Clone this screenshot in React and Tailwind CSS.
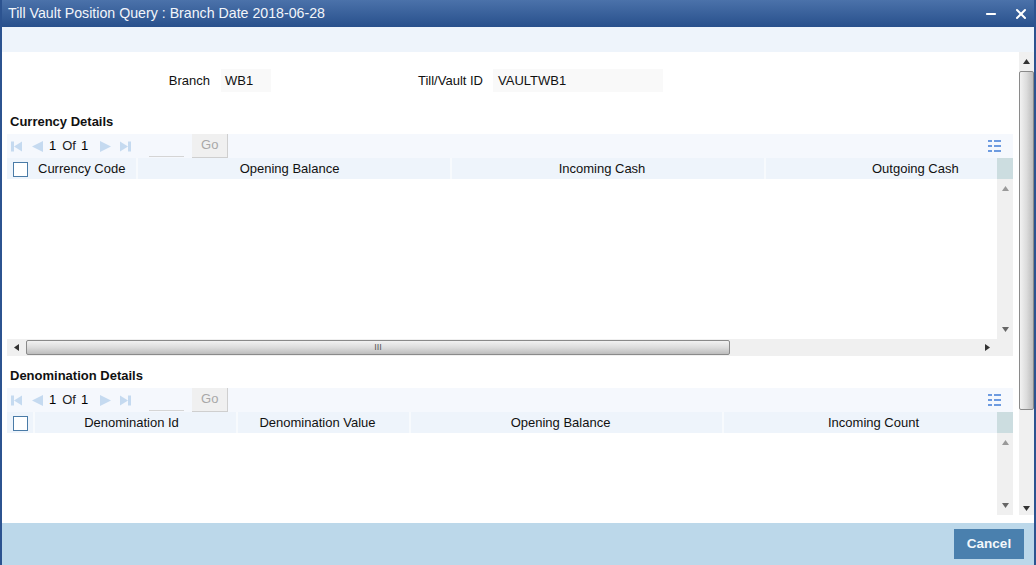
import { Minus, X } from "lucide-react";

function Arrow({ dir, color = "#555", size = 7 }) {
  const paths = {
    up: "M0 6 L3.5 1 L7 6 Z",
    down: "M0 1 L3.5 6 L7 1 Z",
    left: "M6 0 L1 3.5 L6 7 Z",
    right: "M1 0 L6 3.5 L1 7 Z",
  };
  return (
    <svg width={size} height={size} viewBox="0 0 7 7" className="block">
      <path d={paths[dir]} fill={color} />
    </svg>
  );
}

function PagerIcon({ flip, tall }) {
  return (
    <svg width="11" height="11" viewBox="0 0 11 11" className={flip ? "block -scale-x-100" : "block"}>
      {tall && <rect x="0" y="0.5" width="3" height="10" fill="#c5daf0" />}
      <path d={tall ? "M11 0.5 L3 5.5 L11 10.5 Z" : "M11 0 L0 5.5 L11 11 Z"} fill="#c5daf0" />
    </svg>
  );
}

function ListIcon() {
  return (
    <svg width="13" height="12" viewBox="0 0 13 12" className="block">
      <rect x="0" y="0" width="4" height="2" fill="#6d9be0" />
      <rect x="6" y="0" width="7" height="2" fill="#6d9be0" />
      <rect x="0" y="5" width="4" height="2" fill="#6d9be0" />
      <rect x="6" y="5" width="7" height="2" fill="#6d9be0" />
      <rect x="0" y="10" width="4" height="2" fill="#6d9be0" />
      <rect x="6" y="10" width="7" height="2" fill="#6d9be0" />
    </svg>
  );
}

function GridToolbar() {
  return (
    <div className="flex h-[24px] items-center bg-[#f5f8fd] pl-[4px] pr-[12px]">
      <PagerIcon tall />
      <div className="ml-[10px]"><PagerIcon /></div>
      <span className="ml-[6px] text-[13px] text-black">1</span>
      <span className="ml-[6px] text-[13px] text-[#222]">Of</span>
      <span className="ml-[5px] text-[13px] text-black">1</span>
      <div className="ml-[12px]"><PagerIcon flip /></div>
      <div className="ml-[9px]"><PagerIcon flip tall /></div>
      <div className="ml-[18px] h-[23px] w-[35px] self-start border-b border-[#d5d5d5]" />
      <div className="ml-[8px] flex h-[24px] w-[36px] items-center justify-center self-start border-r border-b border-[#cfcfcf] bg-[#f0f0f0] pb-[2px] text-[13px] text-[#a8a8a8]">
        Go
      </div>
      <div className="ml-auto"><ListIcon /></div>
    </div>
  );
}

function GridHeader({ cols }) {
  return (
    <div className="flex h-[21px] items-center">
      {cols.map((c, i) => (
        <div
          key={i}
          style={{ width: c.w, paddingLeft: c.inset, paddingRight: c.nudge }}
          className={`flex h-full shrink-0 items-center bg-[#eef4fb] pt-[1px] text-[13px] text-[#111] ${
            c.left ? "" : "justify-center"
          } ${i < cols.length - 1 ? "border-r-2 border-[#f7fafd]" : ""}`}
        >
          {c.check && <div className="ml-[6px] h-[15px] w-[15px] shrink-0 border border-[#4a7ba7] bg-white" />}
          {c.label && <span className={c.check ? "ml-[10px]" : ""}>{c.label}</span>}
        </div>
      ))}
      <div className="h-full w-[16px] shrink-0 bg-[#ccdde0]" />
    </div>
  );
}

function VScroll() {
  return (
    <div className="flex w-[16px] shrink-0 flex-col items-center justify-between bg-[#f0f0f0] py-[6px]">
      <Arrow dir="up" color="#999" />
      <Arrow dir="down" color="#666" />
    </div>
  );
}

function HScroll() {
  return (
    <div className="flex h-[17px] items-center bg-[#f0f0f0]">
      <div className="flex w-[19px] justify-center"><Arrow dir="left" color="#333" /></div>
      <div className="flex h-[15px] w-[704px] items-center justify-center rounded-[2px] border border-[#8a8a8a] bg-gradient-to-b from-[#f2f2f2] via-[#dcdcdc] to-[#bdbdbd] text-[9px] leading-none text-[#555]">
        III
      </div>
      <div className="ml-auto mr-[22px]"><Arrow dir="right" color="#333" /></div>
    </div>
  );
}

const currencyCols = [
  { w: 131, check: true, label: "Currency Code", left: true },
  { w: 314, label: "Opening Balance", nudge: 9 },
  { w: 314, label: "Incoming Cash", nudge: 12 },
  { w: 231, label: "Outgoing Cash", left: true, inset: 106 },
];

const denominationCols = [
  { w: 28, check: true, left: true },
  { w: 203, label: "Denomination Id", nudge: 8 },
  { w: 173, label: "Denomination Value", nudge: 12 },
  { w: 313, label: "Opening Balance", nudge: 12 },
  { w: 273, label: "Incoming Count", left: true, inset: 104 },
];

export default function App() {
  return (
    <div
      className="flex h-[565px] w-[1036px] flex-col overflow-hidden border-x-2 border-[#2c5390] bg-white text-[#111]"
      style={{ fontFamily: '"Liberation Sans", Arial, sans-serif' }}
    >
      <div className="-mx-[2px] flex h-[27px] shrink-0 items-center justify-between bg-gradient-to-b from-[#4b72aa] to-[#28508c] pl-[8px] pr-[7px]">
        <span className="text-[14.2px] text-[#f2f5fa]">Till Vault Position Query : Branch Date 2018-06-28</span>
        <div className="flex items-center gap-[15px]">
          <Minus size={14} strokeWidth={3.5} color="#fff" />
          <X size={16} strokeWidth={3} color="#fff" />
        </div>
      </div>
      <div className="h-[25px] shrink-0 bg-[#eef4fb]" />

      <div className="flex h-[471px] shrink-0">
        <div className="w-[1017px] pl-[5px] pr-[6px]">
          <div className="mt-[17px] flex h-[23px] items-center text-[13px]">
            <div className="w-[203px] pt-[1px] text-right">Branch</div>
            <div className="ml-[11px] flex h-[23px] w-[50px] items-center bg-[#f9f9f9] pl-[4px]">WB1</div>
            <div className="w-[212px] pt-[1px] text-right">Till/Vault ID</div>
            <div className="ml-[10px] flex h-[23px] w-[170px] items-center bg-[#f9f9f9] pl-[5px]">VAULTWB1</div>
          </div>

          <h2 className="mt-[20px] h-[22px] pl-[3px] text-[13px] font-bold leading-[20px]">Currency Details</h2>
          <GridToolbar />
          <GridHeader cols={currencyCols} />
          <div className="flex h-[160px]">
            <div className="flex-1" />
            <VScroll />
          </div>
          <HScroll />

          <h2 className="mt-[10px] h-[22px] pl-[3px] text-[13px] font-bold leading-[20px]">Denomination Details</h2>
          <GridToolbar />
          <GridHeader cols={denominationCols} />
          <div className="flex h-[82px]">
            <div className="flex-1" />
            <VScroll />
          </div>
        </div>

        <div className="flex h-[463px] w-[15px] shrink-0 flex-col items-center bg-[#f0f0f0]">
          <div className="flex h-[19px] items-center"><Arrow dir="up" color="#333" /></div>
          <div className="h-[339px] w-full rounded-[2px] border border-[#8a8a8a] bg-gradient-to-r from-[#f2f2f2] via-[#dcdcdc] to-[#bdbdbd]" />
          <div className="mt-auto pb-[3px]"><Arrow dir="down" color="#333" /></div>
        </div>
      </div>

      <div className="flex h-[42px] shrink-0 items-start justify-end bg-[#bcd8ea] pr-[10px] pt-[6px]">
        <div className="flex h-[30px] w-[70px] items-center justify-center bg-[#4a80ae] text-[13.5px] font-bold text-[#f2f7fb]">
          Cancel
        </div>
      </div>
    </div>
  );
}
